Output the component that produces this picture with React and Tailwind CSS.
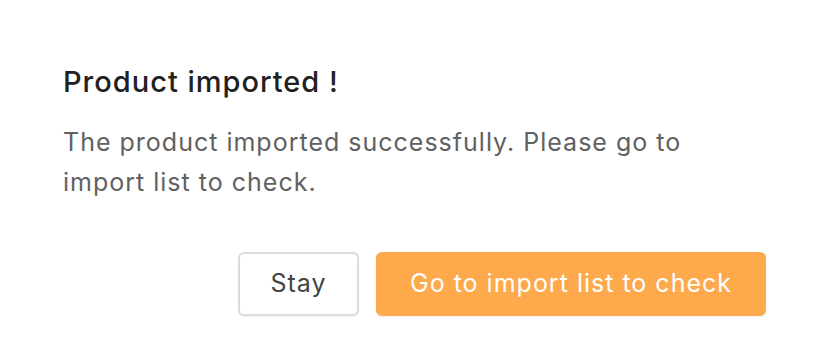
export default function App() {
  return (
    <div className="w-[826px] h-[360px] bg-white font-['Inter','Liberation_Sans',sans-serif] pl-[63px] pr-[60px] pt-[64px]">
      <h2 className="text-[29px] leading-[36px] tracking-[1px] font-medium text-[#212121]">Product imported !</h2>
      <p className="mt-[22px] text-[25px] leading-[40px] tracking-[1px] text-[#616161]">
        The product imported successfully. Please go to import list to check.
      </p>
      <div className="mt-[50px] flex justify-end gap-[17px]">
        <button className="h-[64px] w-[121px] rounded-[6px] border-2 border-[#dcdcdc] bg-white text-[25px] tracking-[1px] text-[#444] shadow-[0_1px_2px_rgba(0,0,0,0.06)]">
          Stay
        </button>
        <button className="h-[64px] w-[390px] rounded-[6px] bg-[#ffa94d] text-[25px] tracking-[1px] text-white shadow-[0_1px_2px_rgba(0,0,0,0.08)]">
          Go to import list to check
        </button>
      </div>
    </div>
  );
}
